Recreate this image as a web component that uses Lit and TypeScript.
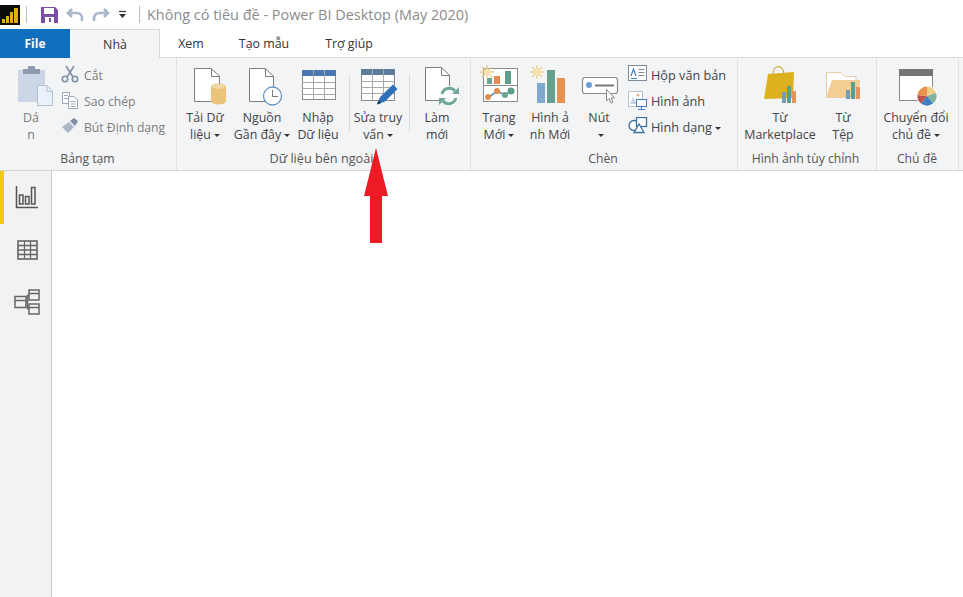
import { LitElement, html, css, svg } from "lit";
import { customElement } from "lit/decorators.js";

const DOC = (x: number, y: number, w: number, h: number) => svg`<path d="M${x}.5 ${y}.5H${x + w - 8}L${x + w}.5 ${y + 8}V${y + h}.5H${x}.5Z" fill="#fff" stroke="#7d7d7d"/><path d="M${x + w - 8}.5 ${y}.5V${y + 8}.5H${x + w}" fill="none" stroke="#7d7d7d"/>`;
const GRID = (x: number, y: number, w: number, h: number, head: string) => svg`
  <rect x="${x}.5" y="${y}.5" width="${w}" height="${h}" fill="#fff" stroke="#8a8a8a"/>
  <rect x="${x}" y="${y}" width="${w + 1}" height="6" fill="${head}"/>
  <path d="M${x} ${y + 12}.5H${x + w}M${x} ${y + 18}.5H${x + w}M${x} ${y + 24}.5H${x + w}M${x + w / 3 | 0}.5 ${y}V${y + h}M${x + (2 * w) / 3 | 0}.5 ${y}V${y + h}" stroke="#a8a8a8" fill="none"/>`;
const SUN = (cx: number, cy: number) => svg`<g stroke="#ecd08a" stroke-width="1.4"><path d="M${cx - 7} ${cy}H${cx + 7}M${cx} ${cy - 7}V${cy + 7}M${cx - 5} ${cy - 5}L${cx + 5} ${cy + 5}M${cx + 5} ${cy - 5}L${cx - 5} ${cy + 5}"/></g><circle cx="${cx}" cy="${cy}" r="3" fill="#f6e3ae"/>`;

const ICONS: Record<string, unknown> = {
  paste: svg`<rect x="18" y="70" width="27" height="32" fill="#ccd6e6"/><rect x="23" y="69" width="17" height="5" fill="#8c9bb0"/><rect x="28" y="66" width="7" height="5" rx="1" fill="#8c9bb0"/><path d="M37.500 85.500H47L52.500 91V105.500H37.500Z" fill="#e9f1fa" stroke="#b3c0d1"/><path d="M47 85.500V91.500H52" fill="none" stroke="#b3c0d1"/>`,
  get: svg`${DOC(194, 68, 25, 33)}<path d="M211 87a7.500 3.500 0 0 1 15 0v14a7.500 3.500 0 0 1-15 0Z" fill="#eac27a"/><ellipse cx="218.500" cy="86.500" rx="6.500" ry="2.500" fill="#f3d8a5"/>`,
  recent: svg`${DOC(249, 68, 24, 33)}<circle cx="272.500" cy="96" r="9" fill="#fff" stroke="#6594c4" stroke-width="1.3"/><path d="M272.500 90V96.500H278" fill="none" stroke="#777"/>`,
  enter: GRID(302, 70, 33, 29, "#4a79b2"),
  edit: svg`${GRID(361, 69, 33, 31, "#5d7c9c")}<path d="M377 104.500L380 97L393 84.500L397.500 89L385 101.500Z" fill="#2f70b8"/><path d="M377 104.500L378.500 100.500L381 103Z" fill="#14375c"/>`,
  refresh: svg`${DOC(425, 67, 24, 33)}<circle cx="449" cy="96" r="10" fill="#fff" fill-opacity=".9"/><g fill="none" stroke="#6fa89a" stroke-width="3"><path d="M442 94a7.500 7.500 0 0 1 13-3"/><path d="M456 98a7.500 7.500 0 0 1-13 3"/></g><path d="M452 94h7v-7ZM446 98h-7v7Z" fill="#6fa89a"/>`,
  page: svg`<rect x="483.500" y="68.500" width="34" height="33" fill="#fff" stroke="#8a8a8a"/><path d="M483 85.500H518" stroke="#8a8a8a"/><rect x="487" y="78" width="5" height="6" fill="#6aa392"/><rect x="494" y="76" width="6" height="8" fill="#e28d4e"/><rect x="505" y="71" width="6" height="13" fill="#5f9c8a"/><path d="M488 98L497 91L505 95L512 91" fill="none" stroke="#6f8fae" stroke-width="1.600"/><circle cx="488" cy="97" r="3" fill="#e28d4e"/><circle cx="497" cy="91" r="3" fill="#e28d4e"/><circle cx="505" cy="95" r="3" fill="#6aa392"/><circle cx="511" cy="91" r="3.500" fill="#5f9c8a"/>${SUN(487, 72)}`,
  visual: svg`<rect x="537" y="83" width="8" height="20" fill="#7fa9cf"/><rect x="547" y="70" width="8" height="33" fill="#66a08f"/><rect x="557" y="78" width="8" height="25" fill="#e8924f"/>${SUN(537, 72)}`,
  button: svg`<rect x="582.500" y="77.500" width="35" height="16" rx="2.500" fill="#fff" stroke="#8a8a8a" stroke-width="1.200"/><circle cx="589" cy="85" r="3" fill="#6e9fd0"/><path d="M595 85.500H614" stroke="#777" stroke-width="2"/><path d="M606.500 89.500V101L609 98.500L611 103L613 102L611 98H614.500Z" fill="#fff" stroke="#888"/>`,
  market: svg`<path d="M768 74L794 72L793 98L764 99Z" fill="#dcb01f"/><path d="M773 75c0-11 10-11 11-1" fill="none" stroke="#c9a93a" stroke-width="1.300"/><rect x="782" y="92" width="4" height="11" fill="#6e9fc0"/><rect x="787" y="86" width="4" height="17" fill="#5f9c8a"/><rect x="792" y="91" width="4" height="12" fill="#e8925a"/>`,
  file: svg`<path d="M826.500 72.500H841L845 76.500H856V97.500H826.500Z" fill="#fff" stroke="#e8cfa4"/><path d="M826 97L832 80H861L856 97Z" fill="#f2cd94"/><rect x="846" y="90" width="4" height="9" fill="#6e9fc0"/><rect x="851" y="82" width="4" height="17" fill="#5f9c8a"/><rect x="856" y="87" width="4" height="12" fill="#e8925a"/>`,
  theme: svg`<rect x="899.500" y="69.500" width="33" height="31" fill="#fff" stroke="#8a8a8a"/><rect x="899" y="69" width="34" height="7" fill="#757575"/><circle cx="927" cy="96" r="10.500" fill="#fff"/><path d="M927 96L927 86.500A9.500 9.500 0 0 1 936 93Z" fill="#ecd08a"/><path d="M927 96L936 93A9.500 9.500 0 0 1 933 103.500Z" fill="#7fb0a0"/><path d="M927 96L933 103.500A9.500 9.500 0 0 1 921 103.500Z" fill="#3f7fc0"/><path d="M927 96L921 103.500A9.500 9.500 0 0 1 917.500 95Z" fill="#c0504d"/><path d="M927 96L917.500 95A9.500 9.500 0 0 1 927 86.500Z" fill="#e8924f"/>`,
};

const VIEW: Record<string, string> = {
  paste: "6 60 50 46", get: "182 60 46 46", recent: "234 60 56 46", enter: "290 60 56 46",
  edit: "352 60 52 46", refresh: "414 60 46 46", page: "476 60 46 46", visual: "527 60 46 46",
  button: "576 60 46 46", market: "744 60 72 46", file: "826 60 34 46", theme: "880 60 72 46",
};

const SMALL: Record<string, unknown> = {
  cut: svg`<g fill="none" stroke="#7f90a6" stroke-width="1.600"><circle cx="4" cy="14" r="2.700"/><circle cx="14" cy="14" r="2.700"/><path d="M6 12L13 1M12 12L5 1"/></g>`,
  copy: svg`<g fill="#fff" stroke="#98a7ba"><path d="M1.500 1.500H8.500V12.500H1.500Z"/><path d="M7.500 5.500H13L16.500 9V17.500H7.500Z"/><path d="M3 4.500H7M3 7.500H7M9.500 10.500H14.500M9.500 13H14.500M9.500 15.500H14.500" fill="none"/></g>`,
  brush: svg`<path d="M1 10L8 5L13 10L7 16Z" fill="#a9b6c8"/><path d="M9 4L13 1L17 4L14 9Z" fill="#7f90a6"/>`,
  text: svg`<rect x=".5" y=".5" width="18" height="15" fill="#fff" stroke="#7d8a99"/><path d="M3 11L5.500 4L8 11" fill="none" stroke="#3f7fc0" stroke-width="1.200"/><path d="M3 13.500H9" stroke="#3f7fc0"/><path d="M10.500 4.500H16.500M10.500 7.500H16.500M10.500 10.500H16.500" stroke="#8a8a8a"/>`,
  image: svg`<rect x=".5" y=".5" width="14" height="15" fill="#fff" stroke="#b8c2cd"/><circle cx="10" cy="4" r="1.500" fill="#e8b98a"/><path d="M2 13L5 6L9 13Z" fill="#c5d3e2"/><rect x="8.500" y="8.500" width="10" height="7" fill="#fff" stroke="#3f7fc0"/><path d="M13.500 16V18M10 18.500H17" stroke="#3f7fc0"/>`,
  shape: svg`<circle cx="6" cy="8.500" r="5" fill="#fff" stroke="#3d6f9f" stroke-width="1.300"/><rect x="8.500" y=".5" width="10" height="9" fill="#fff" stroke="#3d6f9f" stroke-width="1.300"/><path d="M11 7L16 15.500H6Z" fill="#fff" stroke="#3d6f9f" stroke-width="1.300"/>`,
};

interface Big { id: string; l1: string; l2: string; caret?: boolean; col: string; off?: boolean }

@customElement("app-root")
export class AppRoot extends LitElement {
  static styles = css`
    :host { display: block; width: 963px; height: 597px; background: #fff; font-family: "Open Sans", "Noto Sans", sans-serif; color: #444; position: relative; overflow: hidden; }
    .title { height: 29px; display: flex; align-items: center; }
    .logo { width: 20px; height: 20px; background: #0c0c0c; display: block; }
    .qsep { width: 1px; height: 17px; background: #bdbdbd; }
    .qsep.a { margin: 0 14px 0 6px; }
    .qsep.b { margin: 0 7px 0 4px; }
    .qi { display: block; margin-right: 8px; }
    .qt { color: #8b8b8b; font-size: 14.450px; white-space: nowrap; }
    .tabs { height: 29px; box-sizing: border-box; display: flex; border-bottom: 1px solid #d9d9d9; font-size: 12.400px; color: #333; }
    .tab { display: flex; align-items: center; justify-content: center; height: 28px; }
    .file { width: 70px; height: 29px; background: #106ebe; color: #fff; font-weight: 700; font-size: 12px; }
    .home { width: 90px; height: 29px; box-sizing: border-box; background: #f3f4f6; border-top: 1px solid #d9d9d9; border-right: 1px solid #d9d9d9; padding-left: 1px; }
    .t1 { width: 62px; }
    .t2 { width: 84px; }
    .t3 { width: 86px; }
    .ribbon { height: 113px; box-sizing: border-box; background: #f3f4f6; border-bottom: 1px solid #d4d4d4; display: flex; }
    .group { box-sizing: border-box; height: 112px; display: flex; flex-direction: column; border-right: 1px solid #e1e2e4; }
    .g1 { width: 177px; padding-left: 6px; }
    .g2 { width: 294px; padding-left: 5px; }
    .g3 { width: 267px; padding-left: 5px; }
    .g4 { width: 139px; padding-left: 6px; }
    .g5 { width: 82px; padding-left: 3px; }
    .body { flex: 1; display: flex; padding-top: 2px; min-height: 0; }
    .glabel { height: 17px; line-height: 17px; margin-bottom: 3px; text-align: center; font-size: 12.200px; color: #555; margin-left: -7px; white-space: nowrap; }
    .g2 .glabel { font-size: 12.700px; margin-left: -9px; }
    .g4 .glabel { margin-left: -9px; }
    .g5 .glabel { margin-left: -4px; }
    .big { display: flex; flex-direction: column; align-items: center; font-size: 12.400px; line-height: 17px; color: #444; white-space: nowrap; }
    .big svg { display: block; width: 100%; height: 46px; margin-bottom: 2.500px; }
    .big.off { color: #7c7c7c; }
    .w34 { width: 34px; }
    .w46 { width: 46px; }
    .w50 { width: 50px; }
    .w52 { width: 52px; }
    .w56 { width: 56px; }
    .w72 { width: 72px; }
    .push3 { margin-left: 3px; }
    .push5 { margin-left: 5px; }
    .push6 { margin-left: 6px; }
    .push10 { margin-left: 10px; }
    .caret { display: inline-block; width: 0; height: 0; border: 3.500px solid transparent; border-top: 3.500px solid #333; border-bottom: 0; vertical-align: 2px; margin-left: 3px; }
    .vsep { width: 1px; height: 58px; background: #dcdcdc; margin-top: 14px; }
    .s1 { margin: 14px 2px 0 3px; }
    .s2 { margin: 14px 4px 0 5px; }
    .col1 { width: 115px; margin-left: 5px; padding-top: 2px; }
    .col3 { margin-left: 6px; padding-top: 2px; }
    .sm { display: flex; align-items: center; height: 26px; font-size: 12.200px; white-space: nowrap; }
    .col3 .sm { font-size: 12.700px; }
    .sm svg { display: block; width: 20px; height: 20px; margin-right: 3px; flex: none; }
    .sm.off { color: #7c7c7c; }
    .main { display: flex; height: 426px; }
    .rail { width: 52px; box-sizing: border-box; background: #f2f2f1; border-right: 1px solid #c9c9c9; display: flex; flex-direction: column; }
    .ri { height: 52.500px; box-sizing: border-box; display: flex; align-items: center; justify-content: center; padding-left: 3px; }
    .ri.on { box-shadow: inset 4px 0 0 #f2c811; }
    .arrow { position: absolute; left: 364px; top: 148px; display: block; }
  `;

  private big(b: Big) {
    return html`<div class="big ${b.col} ${b.off ? "off" : ""}">
      <svg viewBox=${VIEW[b.id]} preserveAspectRatio="xMidYMid meet">${ICONS[b.id]}</svg>
      <span>${b.l1}</span>
      <span>${b.l2}${b.caret ? html`<i class="caret"></i>` : ""}</span>
    </div>`;
  }

  private small(id: string, label: string, off = false, caret = false) {
    return html`<div class="sm ${off ? "off" : ""}"><svg viewBox="0 0 20 20">${SMALL[id]}</svg><span>${label}${caret ? html`<i class="caret"></i>` : ""}</span></div>`;
  }

  render() {
    return html`
      <div class="title">
        <svg class="logo" viewBox="0 0 20 20"><path d="M2 14h3v4H2zM6 11h3v7H6zM10 7h3v11h-3zM14 3h4v15h-4z" fill="#dcb00f"/></svg>
        <div class="qsep a"></div>
        <svg class="qi" width="17" height="16" viewBox="0 0 17 16"><path d="M0 0H14L17 3V16H0Z" fill="#7c4ea8"/><rect x="3" y="1" width="10" height="6" fill="#fff"/><rect x="4" y="10" width="9" height="6" fill="#fff"/><rect x="8" y="11" width="2" height="4" fill="#7c4ea8"/></svg>
        <svg class="qi" width="18" height="15" viewBox="0 0 18 15"><path d="M6 2L2 6L6 10M2.500 6H11a5 5 0 0 1 5 5v3" fill="none" stroke="#a9b8c9" stroke-width="2.600"/></svg>
        <svg class="qi" width="18" height="15" viewBox="0 0 18 15"><path d="M12 2L16 6L12 10M15.500 6H7a5 5 0 0 0-5 5v3" fill="none" stroke="#a9b8c9" stroke-width="2.600"/></svg>
        <svg class="qi" width="9" height="9" viewBox="0 0 9 9"><path d="M1 1.500H8" stroke="#333" stroke-width="1.200"/><path d="M1 4H8L4.500 8Z" fill="#333"/></svg>
        <div class="qsep b"></div>
        <span class="qt">Không có tiêu đề - Power BI Desktop (May 2020)</span>
      </div>
      <div class="tabs">
        <div class="tab file">File</div>
        <div class="tab home">Nhà</div>
        <div class="tab t1">Xem</div>
        <div class="tab t2">Tạo mẫu</div>
        <div class="tab t3">Trợ giúp</div>
      </div>
      <div class="ribbon">
        <div class="group g1">
          <div class="body">
            ${this.big({ id: "paste", l1: "Dá", l2: "n", col: "w50", off: true })}
            <div class="col1">
              ${this.small("cut", "Cắt", true)}
              ${this.small("copy", "Sao chép", true)}
              ${this.small("brush", "Bút Định dạng", true)}
            </div>
          </div>
          <div class="glabel">Bảng tạm</div>
        </div>
        <div class="group g2">
          <div class="body">
            ${this.big({ id: "get", l1: "Tải Dữ", l2: "liệu", caret: true, col: "w46" })}
            ${this.big({ id: "recent", l1: "Nguồn", l2: "Gần đây", caret: true, col: "w56 push6" })}
            ${this.big({ id: "enter", l1: "Nhập", l2: "Dữ liệu", col: "w56" })}
            <div class="vsep s1"></div>
            ${this.big({ id: "edit", l1: "Sửa truy", l2: "vấn", caret: true, col: "w52" })}
            <div class="vsep s2"></div>
            ${this.big({ id: "refresh", l1: "Làm", l2: "mới", col: "w46" })}
          </div>
          <div class="glabel">Dữ liệu bên ngoài</div>
        </div>
        <div class="group g3">
          <div class="body">
            ${this.big({ id: "page", l1: "Trang", l2: "Mới", caret: true, col: "w46" })}
            ${this.big({ id: "visual", l1: "Hình ả", l2: "nh Mới", col: "w46 push5" })}
            ${this.big({ id: "button", l1: "Nút", l2: "", caret: true, col: "w46 push3" })}
            <div class="col3">
              ${this.small("text", "Hộp văn bản")}
              ${this.small("image", "Hình ảnh")}
              ${this.small("shape", "Hình dạng", false, true)}
            </div>
          </div>
          <div class="glabel">Chèn</div>
        </div>
        <div class="group g4">
          <div class="body">
            ${this.big({ id: "market", l1: "Từ", l2: "Marketplace", col: "w72" })}
            ${this.big({ id: "file", l1: "Từ", l2: "Tệp", col: "w34 push10" })}
          </div>
          <div class="glabel">Hình ảnh tùy chỉnh</div>
        </div>
        <div class="group g5">
          <div class="body">
            ${this.big({ id: "theme", l1: "Chuyển đổi", l2: "chủ đề", caret: true, col: "w72" })}
          </div>
          <div class="glabel">Chủ đề</div>
        </div>
      </div>
      <div class="main">
        <div class="rail">
          <div class="ri on"><svg width="24" height="24" viewBox="0 0 24 24" fill="none" stroke="#555" stroke-width="1.500"><path d="M1.500 1V22.500H23"/><rect x="4.500" y="10" width="3.500" height="9"/><rect x="10.500" y="11.500" width="3.500" height="7.500"/><rect x="16.500" y="2.500" width="3.500" height="16.500"/></svg></div>
          <div class="ri"><svg width="21" height="20" viewBox="0 0 21 20"><rect x="1" y="1" width="19" height="18" fill="none" stroke="#666" stroke-width="1.600"/><path d="M1 5.500H20M1 10H20M1 14.500H20M7.500 1V19M13.500 1V19" stroke="#666" stroke-width="1.300"/></svg></div>
          <div class="ri"><svg width="26" height="26" viewBox="0 0 26 26" fill="none" stroke="#666" stroke-width="1.500"><rect x="1" y="7.500" width="11" height="11"/><path d="M1 11.500H12"/><rect x="15" y="1" width="10" height="10"/><path d="M15 4.500H25"/><rect x="15" y="15" width="10" height="10"/><path d="M15 18.500H25"/><path d="M12 13H13.500M13.500 6V20M13.500 6H15M13.500 20H15"/></svg></div>
        </div>
      </div>
      <svg class="arrow" width="24" height="95" viewBox="0 0 24 95"><path d="M12 0L24 48H18V95H6V48H0Z" fill="#ed1c24"/></svg>
    `;
  }
}
